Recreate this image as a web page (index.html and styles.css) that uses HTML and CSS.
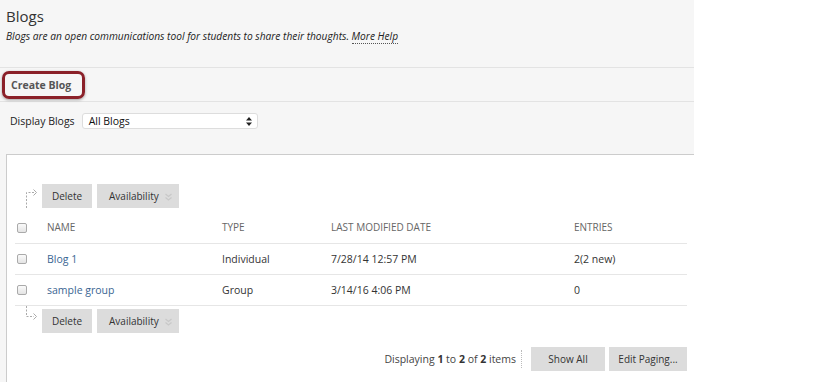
FILE: index.html
```html
<!DOCTYPE html>
<html lang="en">
<head>
    <meta charset="UTF-8">
    <title>Blogs</title>
    <link rel="stylesheet" href="styles.css">
</head>
<body>
    <div class="page">
        <div class="page-header">
            <h1>Blogs</h1>
            <p class="intro">Blogs are an open communications tool for students to share their thoughts. <a href="#" class="help">More Help</a></p>
        </div>

        <div class="action-bar">
            <a href="#" class="create-btn">Create Blog</a>
        </div>

        <div class="filter">
            <label>Display Blogs</label>
            <div class="select">
                <span>All Blogs</span>
                <svg width="6" height="9" viewBox="0 0 6 9"><path d="M3 0 L6 3.5 H0 Z M0 5.5 H6 L3 9 Z" fill="#222"/></svg>
            </div>
        </div>

        <div class="panel">
            <div class="list-actions top">
                <svg class="arrow" width="14" height="24" viewBox="0 0 14 24"><path d="M1.5 24 V8.5 H9" fill="none" stroke="#aaa" stroke-dasharray="2 1.5"/><path d="M8.5 5.5 L11.5 8.5 L8.5 11.5" fill="none" stroke="#aaa"/></svg>
                <button class="btn">Delete</button>
                <button class="btn">Availability <svg class="chev" width="7" height="8" viewBox="0 0 7 8"><path d="M0.5 1 L3.5 3.5 L6.5 1 M0.5 4.5 L3.5 7 L6.5 4.5" fill="none" stroke="#c8c8c8" stroke-width="1.2"/></svg></button>
            </div>

            <div class="table">
                <div class="row head">
                    <span class="check"></span>
                    <span>NAME</span>
                    <span>TYPE</span>
                    <span>LAST MODIFIED DATE</span>
                    <span>ENTRIES</span>
                </div>
                <div class="row">
                    <span class="check"></span>
                    <a href="#">Blog 1</a>
                    <span>Individual</span>
                    <span>7/28/14 12:57 PM</span>
                    <span>2(2 new)</span>
                </div>
                <div class="row">
                    <span class="check"></span>
                    <a href="#">sample group</a>
                    <span>Group</span>
                    <span>3/14/16 4:06 PM</span>
                    <span>0</span>
                </div>
            </div>

            <div class="list-actions bottom">
                <svg class="arrow" width="14" height="16" viewBox="0 0 14 16"><path d="M1.5 0 V10.5 H9" fill="none" stroke="#aaa" stroke-dasharray="2 1.5"/><path d="M8.5 7.5 L11.5 10.5 L8.5 13.5" fill="none" stroke="#aaa"/></svg>
                <button class="btn">Delete</button>
                <button class="btn">Availability <svg class="chev" width="7" height="8" viewBox="0 0 7 8"><path d="M0.5 1 L3.5 3.5 L6.5 1 M0.5 4.5 L3.5 7 L6.5 4.5" fill="none" stroke="#c8c8c8" stroke-width="1.2"/></svg></button>
            </div>

            <div class="paging">
                <span class="count">Displaying <b>1</b> to <b>2</b> of <b>2</b> items</span>
                <button class="btn show-all">Show All</button>
                <button class="btn edit-paging">Edit Paging...</button>
            </div>
        </div>
    </div>
</body>
</html>
```

FILE: styles.css
```css
body {
    margin: 0;
    background: #fff;
    font-family: "Open Sans", "Liberation Sans", sans-serif;
    color: #333;
}

.page {
    width: 694px;
    height: 382px;
    background: #f6f6f6;
    display: flex;
    flex-direction: column;
}

.page-header {
    padding: 6px 6px 0;
    height: 61px;
}

h1 {
    margin: 0;
    font-size: 15px;
    font-weight: normal;
    line-height: 20px;
    color: #333;
}

.intro {
    margin: 0;
    font-size: 10.2px;
    font-style: italic;
    line-height: 20px;
    color: #222;
}

.help {
    color: #222;
    text-decoration: none;
    border-bottom: 1px dotted #555;
}

.action-bar {
    border-top: 1px solid #e3e3e3;
    border-bottom: 1px solid #e3e3e3;
    height: 33px;
    display: flex;
    align-items: center;
    padding-left: 2px;
}

.create-btn {
    display: inline-block;
    padding: 4px 11px 3px 6px;
    border: 3px solid #8b2129;
    border-radius: 7px;
    box-shadow: 0 1px 3px rgba(0, 0, 0, 0.35);
    font-size: 10.5px;
    font-weight: bold;
    color: #555;
    text-decoration: none;
    line-height: 15px;
}

.filter {
    display: flex;
    align-items: center;
    gap: 7px;
    margin-top: 11px;
    padding-left: 10px;
    height: 16px;
    font-size: 10.5px;
    color: #222;
}

.filter label {
    margin-top: -1px;
}

.select {
    width: 176px;
    height: 16px;
    box-sizing: border-box;
    background: #fff;
    border: 1px solid #ddd;
    border-radius: 3px;
    display: flex;
    align-items: center;
    justify-content: space-between;
    padding: 0 5px 0 6px;
    font-size: 10.5px;
    color: #111;
}

.panel {
    flex: 1;
    margin: 25px 0 0 6px;
    background: #fff;
    border-top: 1px solid #ccc;
    border-left: 1px solid #ccc;
    padding: 29px 7px 0 8px;
}

.list-actions {
    display: flex;
    align-items: center;
    gap: 5px;
    height: 24px;
}

.list-actions .arrow {
    margin: 0 -2px 0 10px;
}

.list-actions.top .arrow {
    align-self: flex-start;
}

.list-actions.bottom {
    margin-top: 3px;
}

.list-actions.bottom .arrow {
    align-self: flex-start;
    margin-top: -3px;
}

.btn {
    height: 24px;
    border: none;
    background: #dcdcdc;
    font-family: inherit;
    font-size: 10px;
    color: #333;
    padding: 0;
    white-space: nowrap;
}

.list-actions .btn:first-of-type {
    width: 50px;
}

.list-actions .btn + .btn {
    width: 82px;
    padding: 0 0 0 12px;
    text-align: left;
}

.chev {
    margin-left: 4px;
    vertical-align: -1px;
}

.table {
    margin-top: 10px;
}

.row {
    display: grid;
    grid-template-columns: 32px 175px 109px 243px 1fr;
    align-items: center;
    height: 31px;
    border-bottom: 1px solid #e6e6e6;
    box-sizing: border-box;
    font-size: 10.5px;
    color: #333;
}

.row.head {
    height: 26px;
    align-items: start;
    padding-top: 2px;
    color: #666;
    font-size: 10px;
}

.row a {
    color: #3a6592;
    text-decoration: none;
}

.check {
    width: 8px;
    height: 8px;
    margin-left: 2px;
    border: 1px solid #aaa;
    border-radius: 2px;
    background: linear-gradient(#fafafa, #e4e4e4);
}

.head .check {
    margin-top: 3px;
}

.paging {
    display: flex;
    justify-content: flex-end;
    align-items: center;
    gap: 4px;
    margin-top: 14px;
}

.count {
    font-size: 10.5px;
    color: #444;
    padding-right: 5px;
    border-right: 1px dotted #bbb;
    margin-right: 5px;
    line-height: 18px;
}

.count b {
    color: #333;
}

.show-all {
    width: 74px;
}

.edit-paging {
    width: 78px;
}
```
